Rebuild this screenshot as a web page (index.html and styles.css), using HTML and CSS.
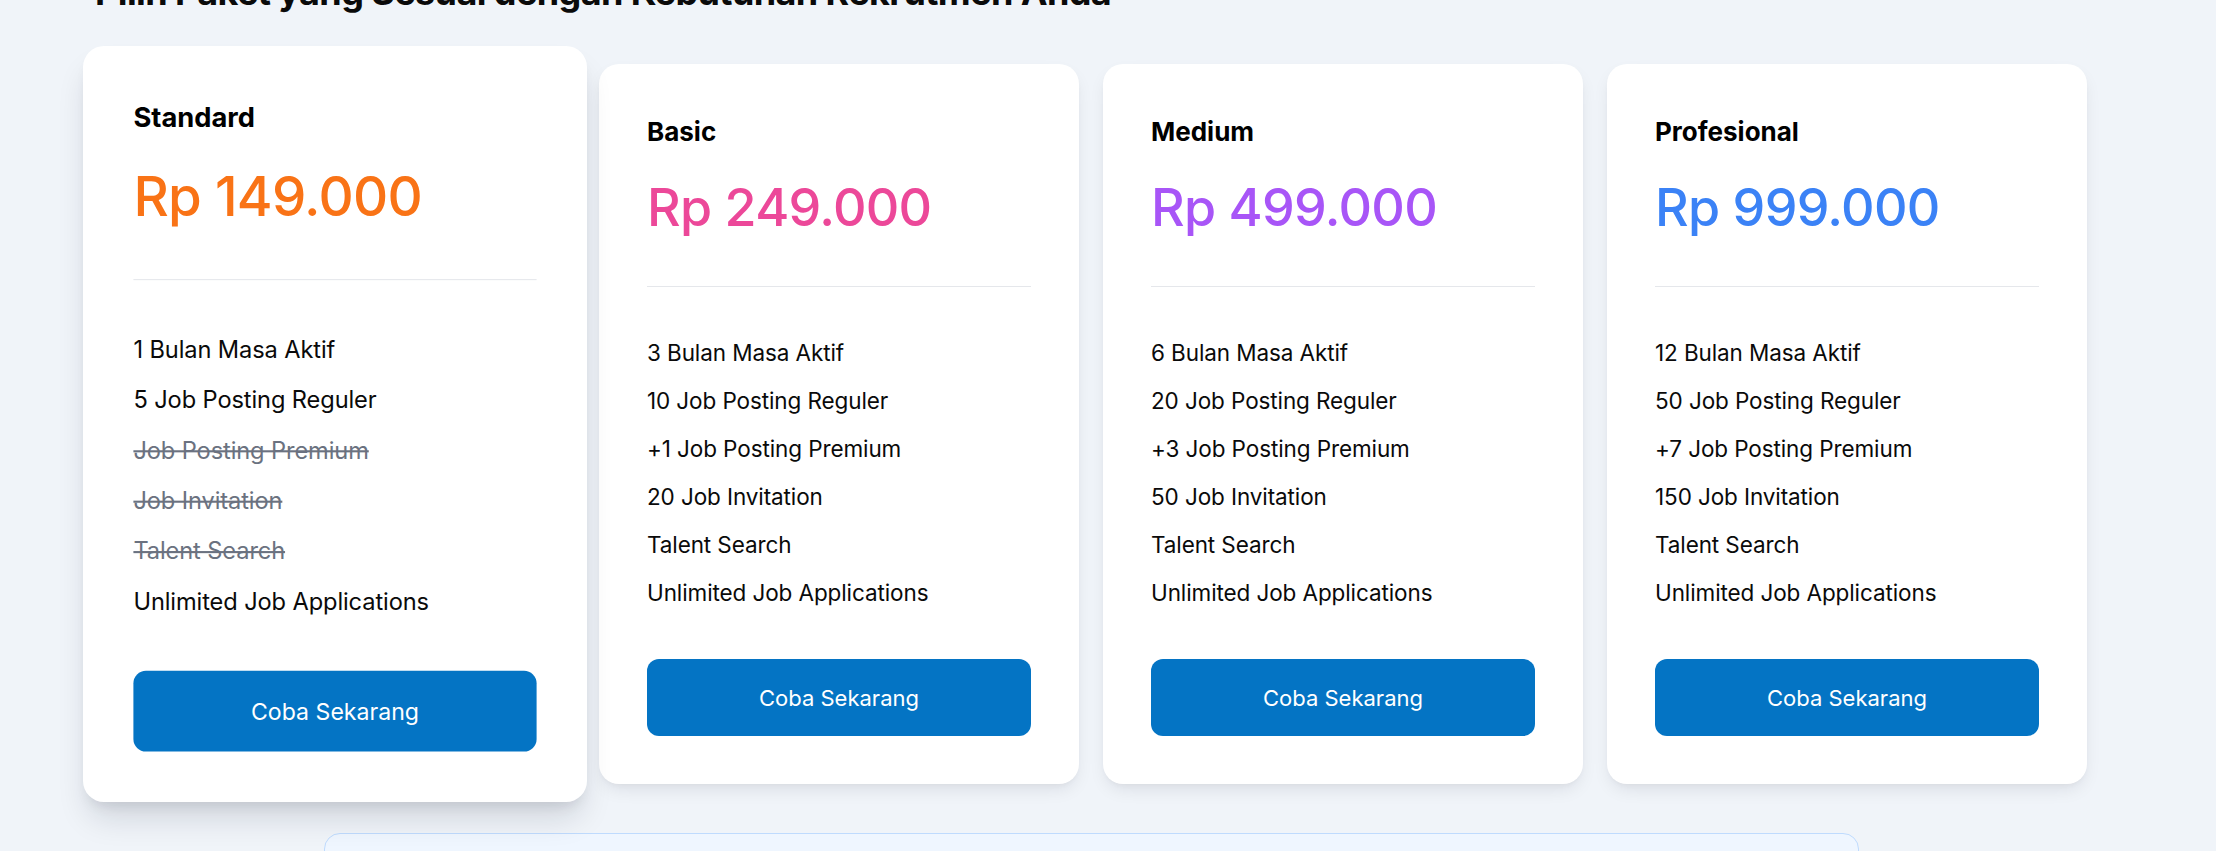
FILE: index.html
```html
<!DOCTYPE html>
<html lang="id">
<head>
<meta charset="utf-8">
<title>Pilih Paket</title>
<link rel="stylesheet" href="styles.css">
</head>
<body>
<div class="page">
  <h2 class="heading">Pilih Paket yang Sesuai dengan Kebutuhan Rekrutmen Anda</h2>
  <div class="plans">
    <div class="card featured">
      <div class="title">Standard</div>
      <div class="price orange">Rp 149.000</div>
      <div class="divider"></div>
      <ul class="features">
        <li>1 Bulan Masa Aktif</li>
        <li>5 Job Posting Reguler</li>
        <li class="off">Job Posting Premium</li>
        <li class="off">Job Invitation</li>
        <li class="off">Talent Search</li>
        <li>Unlimited Job Applications</li>
      </ul>
      <button class="cta">Coba Sekarang</button>
    </div>
    <div class="card">
      <div class="title">Basic</div>
      <div class="price pink">Rp 249.000</div>
      <div class="divider"></div>
      <ul class="features">
        <li>3 Bulan Masa Aktif</li>
        <li>10 Job Posting Reguler</li>
        <li>+1 Job Posting Premium</li>
        <li>20 Job Invitation</li>
        <li>Talent Search</li>
        <li>Unlimited Job Applications</li>
      </ul>
      <button class="cta">Coba Sekarang</button>
    </div>
    <div class="card">
      <div class="title">Medium</div>
      <div class="price purple">Rp 499.000</div>
      <div class="divider"></div>
      <ul class="features">
        <li>6 Bulan Masa Aktif</li>
        <li>20 Job Posting Reguler</li>
        <li>+3 Job Posting Premium</li>
        <li>50 Job Invitation</li>
        <li>Talent Search</li>
        <li>Unlimited Job Applications</li>
      </ul>
      <button class="cta">Coba Sekarang</button>
    </div>
    <div class="card">
      <div class="title">Profesional</div>
      <div class="price blue">Rp 999.000</div>
      <div class="divider"></div>
      <ul class="features">
        <li>12 Bulan Masa Aktif</li>
        <li>50 Job Posting Reguler</li>
        <li>+7 Job Posting Premium</li>
        <li>150 Job Invitation</li>
        <li>Talent Search</li>
        <li>Unlimited Job Applications</li>
      </ul>
      <button class="cta">Coba Sekarang</button>
    </div>
  </div>
  <div class="note"></div>
</div>
</body>
</html>
```
FILE: styles.css
```css
html, body {
  margin: 0;
  padding: 0;
  background: #f0f4f9;
  overflow: hidden;
}
body {
  font-family: Inter, "Noto Sans", sans-serif;
  color: #111111;
}
.page {
  width: 2182px;
}
.heading {
  margin: -30px 0 50px 95px;
  font-size: 36px;
  line-height: 44px;
  font-weight: 700;
  letter-spacing: -0.6px;
  color: #0a0a0a;
}
.plans {
  display: grid;
  grid-template-columns: repeat(4, 480px);
  gap: 24px;
  width: 1992px;
  margin: 0 auto;
  align-items: start;
}
.card {
  background: #ffffff;
  border-radius: 20px;
  padding: 48px;
  box-shadow: 0 8px 18px -4px rgba(15, 23, 42, 0.10), 0 3px 6px -3px rgba(15, 23, 42, 0.06);
  display: flex;
  flex-direction: column;
}
.card.featured {
  transform: scale(1.05);
  box-shadow: 0 20px 30px -6px rgba(15, 23, 42, 0.14), 0 8px 12px -6px rgba(15, 23, 42, 0.10);
  position: relative;
  z-index: 1;
}
.title {
  font-size: 26px;
  line-height: 40px;
  height: 40px;
  font-weight: 700;
  color: #000000;
}
.price {
  margin-top: 24px;
  font-size: 52px;
  line-height: 64px;
  font-weight: 500;
  letter-spacing: -0.7px;
}
.orange { color: #f97316; }
.pink { color: #ec4899; }
.purple { color: #a855f7; }
.blue { color: #3b82f6; }
.divider {
  margin-top: 46px;
  height: 1px;
  background: #e5e7eb;
}
.features {
  list-style: none;
  margin: 42px 0 0;
  padding: 0;
}
.features li {
  font-size: 22.5px;
  line-height: 48px;
  color: #0a0a0a;
  letter-spacing: -0.1px;
}
.features li.off {
  color: #6b7280;
  text-decoration: line-through;
}
.cta {
  margin-top: 42px;
  height: 77px;
  border: none;
  border-radius: 12px;
  background: #0474c4;
  color: #ffffff;
  font-family: Inter, "Noto Sans", sans-serif;
  font-size: 22px;
  cursor: pointer;
}
.note {
  width: 1535px;
  height: 200px;
  margin: 49px auto 0;
  box-sizing: border-box;
  background: #eff6ff;
  border: 1px solid #bfdbfe;
  border-radius: 16px;
}
```
